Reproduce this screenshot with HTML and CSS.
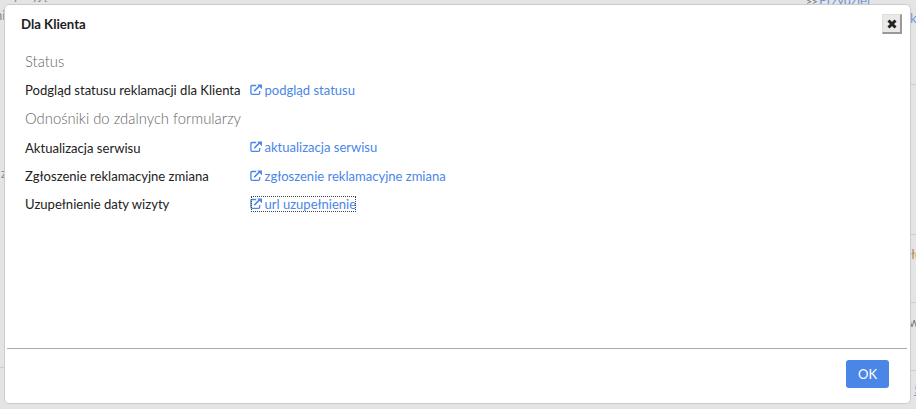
FILE: index.html
```
<!DOCTYPE html>
<html lang="pl">
<head>
<meta charset="utf-8">
<title>Dla Klienta</title>
<link rel="stylesheet" href="styles.css">
</head>
<body>
<svg class="defs" aria-hidden="true">
  <symbol id="ext" viewBox="0 0 12 12">
    <path d="M6.2 1.5H2.2Q.9 1.5 .9 2.8V9Q.9 10.3 2.2 10.3H8.4Q9.7 10.3 9.7 9V7" fill="none" stroke="currentColor" stroke-width="1.3"/>
    <path d="M4.2 7.2L10 1.4" fill="none" stroke="currentColor" stroke-width="1.5"/>
    <path d="M7.2 .5H12V5.3Z" fill="currentColor"/>
  </symbol>
</svg>
<div class="backdrop">
  <span class="bit bit-top">przyję</span>
  <span class="bit bit-ni">ni</span>
  <span class="bit bit-z">z</span>
  <span class="bit bit-assign">&gt;&gt;</span>
  <a class="bit bit-link">Przydziel</a>
  <a class="bit bit-k">k</a>
  <span class="bit bit-l">ło</span>
  <span class="bit bit-w">w</span>
  <a class="bit bit-5">5</a>
  <i class="rule r1"></i><i class="rule r2"></i><i class="rule r3"></i><i class="rule r4"></i><i class="rule r5"></i>
</div>
<section class="dialog">
  <header class="head">
    <h1>Dla Klienta</h1>
    <button class="close" aria-label="Zamknij"><svg width="10" height="10" viewBox="0 0 10 10"><path d="M1.5 1.5L8.5 8.5M8.5 1.5L1.5 8.5" stroke="#222" stroke-width="3"/></svg></button>
  </header>
  <main class="content">
    <h2>Status</h2>
    <div class="row"><span>Podgląd statusu reklamacji dla Klienta</span><a><svg class="ext"><use href="#ext"/></svg>podgląd statusu</a></div>
    <h2>Odnośniki do zdalnych formularzy</h2>
    <div class="row"><span>Aktualizacja serwisu</span><a><svg class="ext"><use href="#ext"/></svg>aktualizacja serwisu</a></div>
    <div class="row"><span>Zgłoszenie reklamacyjne zmiana</span><a><svg class="ext"><use href="#ext"/></svg>zgłoszenie reklamacyjne zmiana</a></div>
    <div class="row"><span>Uzupełnienie daty wizyty</span><a class="focus"><svg class="ext"><use href="#ext"/></svg>url uzupełnienie</a></div>
  </main>
  <footer class="foot"><button class="ok">OK</button></footer>
</section>
</body>
</html>
```

FILE: styles.css
```
* { box-sizing: border-box; }
body { margin: 0; width: 916px; height: 409px; overflow: hidden; background: #e4e4e4; color: #222; font: 13px/16px Lato, sans-serif; }
.defs { position: absolute; width: 0; height: 0; }
a { color: #4a86e8; }
.backdrop { position: absolute; inset: 0; overflow: hidden; color: #8a8a8a; }
.backdrop a { color: #7097d8; }
.bit { position: absolute; white-space: nowrap; }
.bit-top { left: 14px; top: -13px; }
.bit-ni { left: -5px; top: 7px; }
.bit-z { left: 1px; top: 165px; }
.bit-assign { left: 806px; top: -7px; font-size: 10px; color: #666; }
.bit-link { left: 819px; top: -8px; }
.bit-k { left: 910px; top: 10px; }
.bit-l { left: 911px; top: 246px; color: #b9854f; }
.bit-w { left: 909px; top: 314px; color: #777; }
.bit-5 { left: 914px; top: 381px; text-decoration: underline; }
.rule { position: absolute; left: 911px; width: 5px; height: 1px; background: #ccc; }
.r1 { top: 84px; }
.r2 { top: 234px; }
.r3 { top: 302px; }
.r4 { top: 370px; }
.r5 { left: 0; top: 367px; }
.dialog { position: relative; display: flex; flex-direction: column; width: 907px; height: 400px; margin: 4px 0 0 4px; padding: 0 3px 0 2px; border: 1px solid #ccc; border-radius: 5px; background: #fff; }
.head { display: flex; justify-content: space-between; padding: 9px 5px 0 14px; height: 47px; }
h1 { margin: 2px 0 0; font-size: 13.2px; line-height: 16px; font-weight: bold; }
.close { display: flex; align-items: center; justify-content: center; width: 20px; height: 20px; padding: 0; border: 2px solid; border-width: 1px 2px 2px 1px; border-color: #ddd #999 #999 #ddd; background: #e9e9e7; }
.content { flex: 1; padding-left: 18px; }
h2 { margin: 0 0 6px; height: 18px; font-size: 14.8px; line-height: 18px; font-weight: 300; color: #666; }
.row { display: grid; grid-template-columns: 225px max-content; align-items: center; height: 28px; }
.row + h2 { margin: 5px 0 7px; }
.row + h2 + .row a { margin-top: -2px; }
.row span { font-size: 13.08px; }
.row a { display: flex; align-items: center; height: 16px; font-size: 13.04px; }
.ext { width: 12px; height: 12px; margin-right: 2.5px; }
.row .focus { outline: 1px dotted #444; outline-offset: -1px; margin-left: 1px; }
.focus .ext { margin-left: -1px; }
.foot { display: flex; justify-content: flex-end; height: 55px; padding: 11px 18px 0 0; border-top: 1px solid #aaa; }
.ok { width: 43px; height: 28px; padding: 0; border: 0; border-radius: 3px; background: #4a86e8; color: #fff; font: 13px/28px Lato, sans-serif; }
```
